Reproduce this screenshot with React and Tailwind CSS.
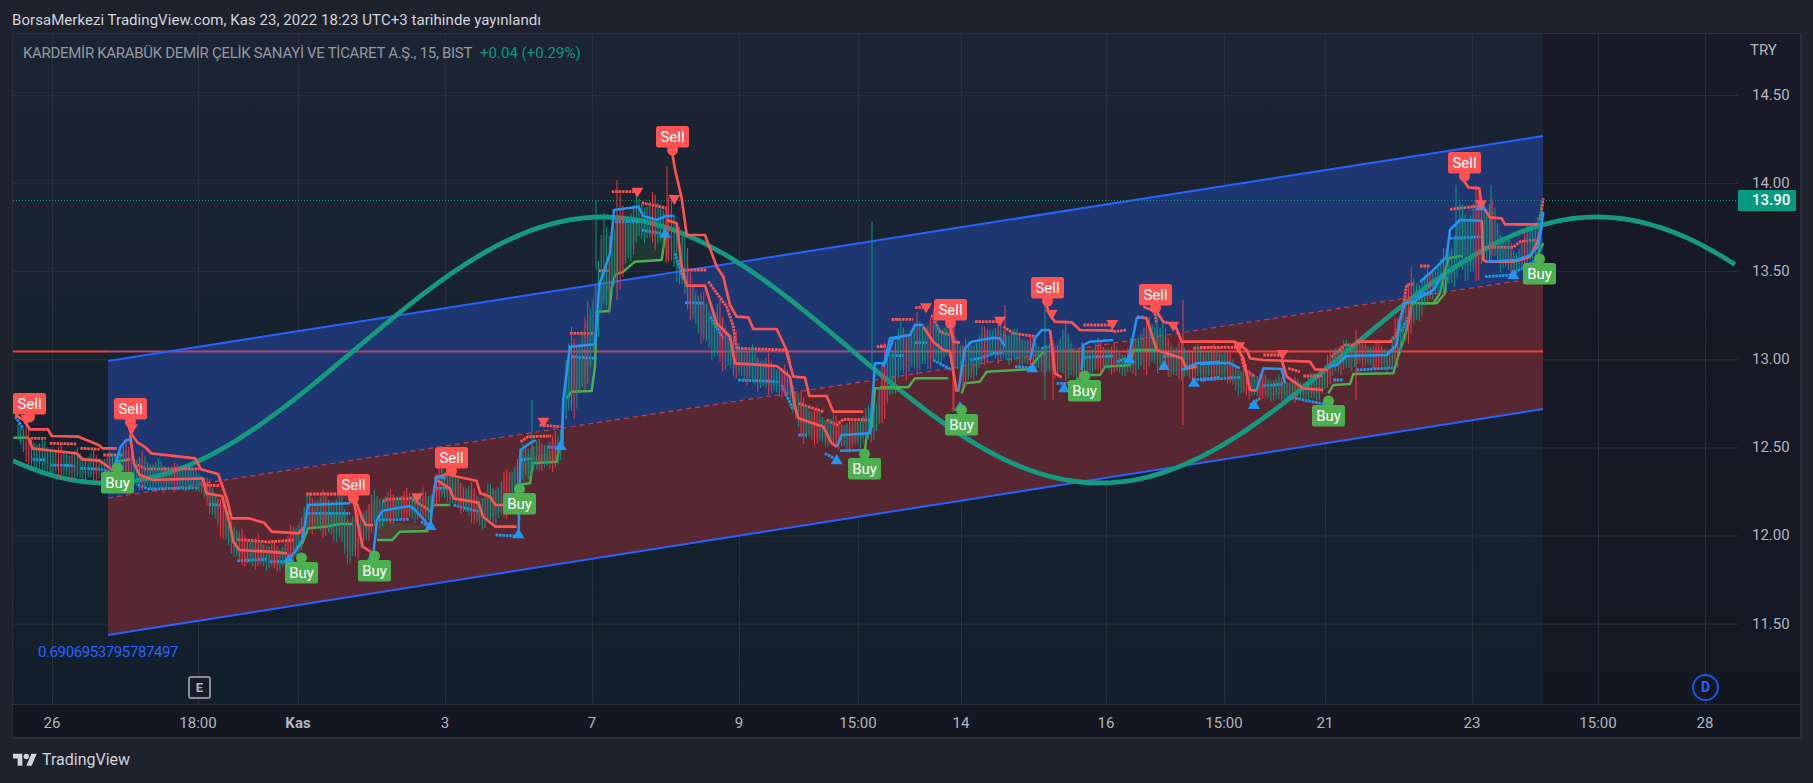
import React from 'react';

const PLOT_W = 1725;
const PLOT_H = 670;
const OX = 13;
const OY = 34;

// every trace below is read off a crop of the chart, so each crop gets its own mapping
const at = (ox, oy, sx, sy) => (lines) =>
  lines.map((l) => l.map(([x, y]) => [ox + x / sx - OX, oy + y / sy - OY]));
const A = at(0, 370, 2.613, 3);
const B = at(560, 110, 3, 3);
const C = at(880, 270, 3, 3);
const D = at(1200, 270, 3, 3);
const E = at(1420, 130, 3, 3);

const redThick = [
  ...A([
    [[40,135],[62,150],[78,178],[125,178],[135,198],[205,200],[232,213],[258,225],[268,235],[305,235]],
    [[332,150],[342,190],[360,218],[380,232],[395,250],[510,265],[525,298],[570,312],[580,345],[595,395],[605,445],[650,445],[690,458],[710,485],[780,490],[795,472]],
    [[910,375],[930,395],[945,440],[955,465],[975,465]],
    [[1135,325],[1170,312],[1195,320],[1245,332],[1255,370],[1280,380],[1295,405],[1340,405]],
    [[75,205],[85,235],[120,240],[200,250],[215,268],[260,272],[295,300]],
    [[340,195],[350,280],[365,315],[400,330],[530,325],[540,370],[580,378],[600,460],[610,515],[625,540],[700,545],[750,550]],
    [[925,395],[935,460],[948,530],[975,550]],
    [[1140,330],[1175,355],[1185,385],[1250,398],[1262,440],[1295,470],[1350,470]],
  ]),
  ...B([
    [[337,130],[345,178],[365,265],[380,375],[435,375],[470,470],[490,500],[510,585],[530,620],[565,622],[580,657],[650,657],[675,710],[700,800],[735,803],[748,858],[800,858],[820,905],[910,905]],
    [[320,330],[350,340],[365,470],[380,527],[435,527],[470,640],[510,680],[525,760],[650,768],[690,800],[705,890],[715,925],[745,935],[790,950],[815,1000],[830,1010]],
  ]),
  ...C([
    [[130,170],[160,215],[190,240],[210,245],[230,365]],
    [[210,165],[220,215],[240,218]],
    [[497,100],[510,135],[525,155],[575,157],[600,180],[700,182]],
    [[510,180],[525,310],[545,322]],
    [[790,110],[830,125],[850,155],[885,165],[905,215],[1020,215]],
    [[770,140],[800,145],[830,240],[905,265],[920,295],[950,290]],
  ]),
  ...D([
    [[0,215],[105,215],[140,240],[150,265],[190,270],[330,275],[345,298],[385,300]],
    [[105,225],[130,265],[150,360],[170,362]],
    [[245,270],[260,320],[310,355],[370,360]],
    [[470,215],[575,215]],
  ]),
  ...E([
    [[130,150],[145,172],[178,175],[185,225],[210,262],[245,265],[255,283],[355,283]],
    [[185,270],[190,390],[200,395],[280,395],[330,380],[350,340],[365,290]],
  ]),
];

const redDots = [
  ...A([
    [[80,205],[120,205]],[[130,220],[200,222]],[[210,235],[260,238]],[[270,255],[320,255]],
    [[360,285],[380,297],[520,297]],[[530,345],[575,347]],[[620,508],[700,516],[770,510]],
    [[800,372],[905,372]],[[1000,395],[1010,388],[1075,385],[1100,405],[1130,425]],
    [[1360,215],[1380,200],[1440,198]],[[1410,165],[1465,170]],
  ]),
  ...B([
    [[30,670],[100,670]],[[115,482],[150,482]],[[155,245],[230,245]],[[245,278],[320,295]],
    [[370,480],[440,480]],[[445,515],[500,590],[520,650],[530,715],[680,720],[690,760]],
    [[715,880],[790,905]],[[800,930],[830,945],[850,928],[930,930]],[[950,710],[975,710]],[[995,628],[1020,628]],
  ]),
  ...C([
    [[0,228],[20,228]],[[35,148],[100,148]],[[105,113],[150,110]],[[155,135],[180,185],[210,195]],
    [[285,155],[360,155]],[[370,170],[400,190],[470,200]],[[610,165],[700,165]],[[700,185],[740,180]],
    [[825,130],[830,160]],[[940,235],[1020,232]],
  ]),
  ...D([
    [[0,232],[110,232]],[[125,265],[135,300],[165,320]],[[190,255],[250,255]],[[265,295],[300,305]],
    [[310,318],[370,318]],[[395,262],[435,225],[465,225]],[[570,215],[590,195],[600,150],[610,110],[620,45],[640,42]],
  ]),
  ...E([
    [[90,238],[180,228]],[[0,408],[30,408]],[[190,352],[280,352],[300,335],[345,330]],[[360,270],[370,205]],
  ]),
];

const blueThick = [
  ...A([
    [[300,290],[315,230],[330,210],[345,210]],
    [[750,575],[770,545],[790,510],[805,405],[915,400]],
    [[975,560],[985,450],[1000,422],[1070,408],[1085,420],[1120,465]],
    [[1125,465],[1130,395],[1140,320],[1165,325]],
    [[1355,490],[1360,240],[1385,220],[1400,210]],
  ]),
  ...B([
    [[5,1000],[10,870],[30,710],[105,703],[118,525],[150,430],[162,300],[235,290],[250,318],[290,330],[318,318],[340,318]],
    [[830,1010],[845,975],[930,970],[945,760],[975,760],[1000,685],[1020,685]],
    [[840,1022],[920,1020]],
  ]),
  ...C([
    [[10,290],[30,205],[90,195],[105,165],[130,165]],
    [[235,365],[255,235],[275,215],[340,203],[360,205],[375,230]],
    [[450,270],[465,205],[485,180],[510,180]],
    [[605,300],[610,225],[630,215],[700,210]],
    [[745,270],[770,145],[790,140]],
    [[905,300],[950,280],[1020,275]],
  ]),
  ...D([
    [[0,282],[85,278],[120,295]],
    [[170,360],[190,295],[245,297],[255,340]],
    [[385,290],[410,285],[440,258],[560,255],[590,225],[600,150],[615,100],[640,95],[700,60],[730,10]],
  ]),
  ...E([
    [[0,455],[30,430],[80,380],[90,300],[120,270],[185,272]],
    [[200,395],[290,390],[330,375],[355,350],[370,245]],
  ]),
];

const blueDots = [
  ...A([
    [[40,140],[60,175]],[[85,268],[120,270]],[[130,285],[195,287]],[[210,295],[265,298],[295,310]],
    [[360,345],[390,357],[520,353]],[[545,403],[575,405]],[[620,572],[700,568]],[[705,575],[745,575]],
    [[805,430],[915,430]],[[990,450],[1070,448]],[[1100,455],[1120,470]],[[1140,355],[1170,355]],
    [[1185,405],[1250,425]],[[1295,495],[1350,498]],[[1360,270],[1390,265]],[[1430,232],[1460,232]],
  ]),
  ...B([
    [[35,740],[110,745]],[[165,335],[240,335]],[[245,360],[300,370]],[[345,430],[370,510]],[[375,578],[430,580]],
    [[450,620],[490,685]],[[535,810],[660,815]],[[665,825],[700,900]],[[715,975],[740,975]],[[795,1030],[830,1050]],
  ]),
  ...C([
    [[35,257],[70,257]],[[105,218],[140,218]],[[160,270],[215,300]],[[270,270],[300,265],[340,250],[370,250]],
    [[405,290],[450,293]],[[485,235],[510,230]],[[530,340],[600,340]],[[615,262],[700,258]],[[710,275],[740,265]],
    [[850,260],[880,258]],[[940,330],[1020,322]],
  ]),
  ...D([
    [[0,330],[120,322]],[[190,348],[250,342]],[[150,405],[180,385]],[[265,380],[310,390],[370,402]],
    [[400,330],[430,330]],[[470,300],[580,293]],[[605,185],[635,120]],[[640,80],[695,70]],
  ]),
  ...E([
    [[90,325],[190,320]],[[195,440],[270,435],[350,390],[365,375]],[[0,490],[35,490]],
  ]),
];

const green = [
  ...A([
    [[35,203],[75,203]],[[305,275],[340,268]],
    [[770,545],[790,520],[805,475],[850,470],[890,462],[920,462]],
    [[985,510],[1025,510],[1045,485],[1120,483]],
    [[1135,405],[1175,405]],
    [[1355,345],[1385,340],[1392,280],[1455,275],[1460,240]],
  ]),
  ...B([
    [[20,865],[35,845],[95,843],[105,770],[110,605],[148,603],[155,535],[165,495],[190,485],[225,455],[305,450],[315,380]],
    [[915,1020],[920,975],[935,950],[945,835],[1020,835]],
  ]),
  ...C([
    [[0,352],[85,352],[105,325],[205,325]],
    [[245,370],[255,340],[300,335],[320,305],[445,298],[490,245]],
    [[570,345],[610,315],[660,315],[675,290],[750,285],[760,240],[830,240]],
  ]),
  ...D([
    [[385,370],[400,345],[450,342],[460,312],[580,310],[600,240],[625,165],[635,100],[710,100],[735,70],[740,20]],
  ]),
  ...E([
    [[0,520],[40,520],[60,490],[85,385],[125,377]],
    [[345,390],[370,340]],
  ]),
];

const greenFills = [
  ...B([
    [[162,335],[310,330],[310,450],[225,455],[190,485],[165,495],[155,535],[148,600],[112,600],[118,525],[150,430]],
    [[30,740],[105,740],[95,843],[35,845],[20,865]],
  ]),
  ...A([
    [[1360,270],[1455,240],[1455,275],[1392,280],[1385,340],[1355,345]],
    [[805,430],[915,430],[890,462],[805,475]],
    [[990,450],[1120,470],[1045,485],[1025,510],[985,510]],
  ]),
];

const upTriangles = [
  ...A([[[305,305],[755,565],[975,555],[1125,465],[1355,490],[1465,225]]]),
  ...B([[[315,368],[830,1048]]]),
  ...C([[[240,408],[457,292],[552,352],[748,265],[852,285],[942,335]]]),
  ...D([[[162,402],[380,395]]]),
  ...E([[[183,226],[280,432]]]),
].flat();

const downTriangles = [
  ...A([[[70,150],[345,178],[1090,385],[1420,158]]]),
  ...B([[[232,248],[343,270]]]),
  ...C([[[138,115],[360,155],[515,135],[697,165],[880,170]]]),
  ...D([[[118,232],[247,255]]]),
  ...E([[[183,226]]]),
].flat();

// x, top of the label in page pixels
const sells = [[13,393],[114,398],[337,474],[435,447],[656,126],[934,299],[1031,277],[1139,284],[1448,152]];
const buys = [[101,472],[285,562],[358,560],[503,493],[848,458],[945,414],[1068,380],[1312,405],[1523,263]];

// price cloud: x, highest and lowest wick
const cloud = [
  [18,420,440],[30,430,470],[50,445,475],[80,450,480],[110,455,480],[125,440,480],[135,450,490],[160,460,490],
  [200,470,490],[225,495,545],[240,530,565],[280,545,570],[295,520,565],[305,500,540],[310,490,530],[340,490,545],
  [350,505,570],[365,500,545],[375,490,530],[400,490,520],[430,490,520],[440,460,500],[460,475,510],[480,490,530],
  [505,470,520],[525,440,480],[540,440,470],[560,430,470],[565,340,430],[575,320,420],[590,300,380],[600,220,330],
  [620,195,290],[640,195,240],[660,190,250],[680,200,290],[690,260,320],[700,290,340],[720,300,370],[740,340,380],
  [760,350,390],[790,370,400],[800,390,440],[820,410,445],[850,420,450],[875,400,440],[885,340,420],[900,320,380],
  [930,310,370],[950,320,360],[965,340,390],[990,320,360],[1020,330,365],[1050,345,375],[1065,320,380],[1080,345,385],
  [1100,340,370],[1125,350,375],[1140,320,375],[1155,310,370],[1175,340,380],[1200,345,380],[1225,345,380],[1240,365,395],
  [1270,375,400],[1300,380,400],[1320,370,400],[1335,340,375],[1360,340,365],[1390,345,370],[1395,320,370],[1410,270,340],
  [1430,270,300],[1450,240,290],[1460,200,280],[1475,180,290],[1490,190,260],[1500,220,270],[1515,250,275],[1540,200,260],
];

const longWicks = [
  [872,222,363,'#089981'],[667,166,260,'#f23645'],[1183,300,425,'#f23645'],[1053,340,400,'#f23645'],[1045,300,400,'#089981'],
  [617,180,300,'#f23645'],[596,200,270,'#089981'],[1356,330,400,'#f23645'],[1491,185,260,'#089981'],[1456,185,260,'#089981'],
  [954,300,410,'#f23645'],[953,330,412,'#f23645'],[532,400,470,'#089981'],[1005,305,345,'#f23645'],[1157,290,350,'#089981'],
];

function buildWicks() {
  const wicks = [];
  let seg = 0;
  for (let x = 18; x < 1542; x += 2.7) {
    while (seg < cloud.length - 2 && cloud[seg + 1][0] < x) seg++;
    const [x0, t0, b0] = cloud[seg];
    const [x1, t1, b1] = cloud[seg + 1];
    const k = (x - x0) / (x1 - x0);
    const top = t0 + (t1 - t0) * k;
    const bot = b0 + (b1 - b0) * k;
    const r1 = Math.abs(Math.sin(x * 12.9898)) % 1;
    const r2 = Math.abs(Math.sin(x * 78.233)) % 1;
    const y1 = top + (bot - top) * r1 * 0.35 - 3;
    const y2 = bot - (bot - top) * r2 * 0.2 + 3;
    wicks.push([x, y1, y2, r1 + r2 > 1 ? '#089981' : '#f23645']);
  }
  return wicks;
}

const toPoints = (line) => line.map(([x, y]) => `${x.toFixed(1)},${y.toFixed(1)}`).join(' ');

const cycleLine = (() => {
  const pts = [];
  for (let x = 13; x <= 1738; x += 6) {
    pts.push([x - OX, 350 - 133 * Math.cos(((x - 603) / 994) * 2 * Math.PI) - OY]);
  }
  return toPoints(pts);
})();

const cloudShade = toPoints([
  ...cloud.map(([x, t, b]) => [x - OX, t + (b - t) * 0.2 - OY]),
  ...[...cloud].reverse().map(([x, t, b]) => [x - OX, b - (b - t) * 0.2 - OY]),
]);

const prices = ['14.50', '14.00', '13.50', '13.00', '12.50', '12.00', '11.50'];
const timeTicks = [
  [52, '26'], [198, '18:00'], [298, 'Kas', true], [445, '3'], [592, '7'], [739, '9'], [858, '15:00'],
  [961, '14'], [1106, '16'], [1224, '15:00'], [1325, '21'], [1472, '23'], [1598, '15:00'], [1705, '28'],
];

function Lines({ lines, color, width, dash }) {
  return lines.map((l, i) => (
    <polyline key={i} points={toPoints(l)} fill="none" stroke={color} strokeWidth={width} strokeDasharray={dash} strokeLinejoin="round" />
  ));
}

function Marker({ x, y, kind }) {
  const sell = kind === 'Sell';
  const color = sell ? '#ff5252' : '#4caf50';
  const left = x - OX;
  const top = y - OY;
  return (
    <g>
      <circle cx={left + 16.5} cy={sell ? top + 24 : top - 4} r="5.5" fill={color} />
      <rect x={left} y={top} width="33" height="21.5" rx="2.5" fill={color} />
      <text x={left + 16.5} y={top + 16} textAnchor="middle" fill="#fff" fontSize="15" fontFamily='Roboto, sans-serif'>{kind}</text>
    </g>
  );
}

function Chart() {
  const wicks = [...buildWicks(), ...longWicks];
  const ch = (x, y) => [x - OX, y - OY];
  return (
    <svg width={PLOT_W} height={PLOT_H} viewBox={`0 0 ${PLOT_W} ${PLOT_H}`} className="block">
      {prices.map((_, i) => (
        <line key={i} x1="0" x2={PLOT_W} y1={95 + i * 88.1 - OY + 0.5} y2={95 + i * 88.1 - OY + 0.5} stroke="#2a2f3b" />
      ))}
      {timeTicks.map(([x]) => (
        <line key={x} x1={x - OX + 0.5} x2={x - OX + 0.5} y1="0" y2={PLOT_H} stroke="#2a2f3b" />
      ))}

      <line x1="0" x2="95" y1="317.5" y2="317.5" stroke="#f23f3f" strokeWidth="1.8" />
      <polygon points={toPoints([ch(108, 361), ch(1543, 136), ch(1543, 277), ch(108, 498)])} fill="#1e3770" />
      <polygon points={toPoints([ch(108, 498), ch(1543, 277), ch(1543, 409), ch(108, 635)])} fill="#572832" />
      <polyline points={toPoints([ch(108, 351.5), ch(1059, 351.5)])} stroke="#ab4a70" strokeWidth="2" fill="none" />
      <polyline points={toPoints([ch(1059, 351.5), ch(1543, 351.5)])} stroke="#f23f3f" strokeWidth="2" fill="none" />
      <polyline points={toPoints([ch(108, 361), ch(1543, 136)])} stroke="#2962ff" strokeWidth="2" fill="none" />
      <polyline points={toPoints([ch(108, 635), ch(1543, 409)])} stroke="#2962ff" strokeWidth="2" fill="none" />
      <polyline points={toPoints([ch(108, 498), ch(1543, 277)])} stroke="#c2405a" strokeWidth="1.2" strokeDasharray="5 4" fill="none" />

      <line x1="0" x2={PLOT_W} y1="166.5" y2="166.5" stroke="#089981" strokeDasharray="1 2" />

      <polygon points={cloudShade} fill="#d06a90" fillOpacity="0.1" />
      {greenFills.map((l, i) => (
        <polygon key={i} points={toPoints(l)} fill="#4caf50" fillOpacity="0.14" />
      ))}

      <polyline points={cycleLine} fill="none" stroke="#159a80" strokeWidth="4.8" />

      <Lines lines={green} color="#4caf50" width="2.4" />
      <Lines lines={redDots} color="#ff5252" width="2.8" dash="2.6 0.8" />
      <Lines lines={blueDots} color="#2196f3" width="2.8" dash="2.6 0.8" />

      {wicks.map(([x, y1, y2, c], i) => (
        <line key={i} x1={x - OX} x2={x - OX} y1={y1 - OY} y2={y2 - OY} stroke={c} strokeWidth="1" />
      ))}

      <Lines lines={redThick} color="#ff5252" width="2.7" />
      <Lines lines={blueThick} color="#2196f3" width="2.5" />

      {upTriangles.map(([x, y], i) => (
        <polygon key={i} points={`${x},${y - 5} ${x + 6},${y + 5} ${x - 6},${y + 5}`} fill="#2196f3" />
      ))}
      {downTriangles.map(([x, y], i) => (
        <polygon key={i} points={`${x},${y + 5} ${x + 6},${y - 5} ${x - 6},${y - 5}`} fill="#ff5252" />
      ))}
      {sells.map(([x, y], i) => <Marker key={i} x={x} y={y} kind="Sell" />)}
      {buys.map(([x, y], i) => <Marker key={i} x={x} y={y} kind="Buy" />)}
    </svg>
  );
}

export default function App() {
  return (
    <div className="w-[1813px] h-[783px] overflow-hidden bg-[#1e222d] text-[#d1d4dc] flex flex-col font-['Roboto',sans-serif] text-[15px]">
      <div className="h-[33px] pl-[12px] pt-[10px] leading-[20px] tracking-[0.05px]">
        BorsaMerkezi TradingView.com, Kas 23, 2022 18:23 UTC+3 tarihinde yayınlandı
      </div>

      <div className="ml-[12px] w-[1790px] h-[706px] border-[1px] border-[#2a2e39] border-r-2 border-b-2 flex flex-col">
        <div className="flex h-[670px]">
          <div className="relative w-[1725px] bg-gradient-to-b from-[#1b2433] to-[#13202c]">
            <div className="absolute right-0 top-0 bottom-0 w-[195px] bg-gradient-to-b from-[#181b27] to-[#131722]" />
            <div className="absolute inset-0">
              <Chart />
            </div>
            <div className="absolute left-[10px] top-[9px] flex gap-2 text-[#9598a1] leading-[20px]">
              <span className="tracking-[-0.3px]">KARDEMİR KARABÜK DEMİR ÇELİK SANAYİ VE TİCARET A.Ş., 15, BIST</span>
              <span className="text-[#089981]">+0.04 (+0.29%)</span>
            </div>
            <div className="absolute left-[25px] top-[608px] text-[#2962ff] leading-[20px] tracking-[-0.4px]">0.6906953795787497</div>
            <div className="absolute left-[175px] top-[642px] w-[23px] h-[23px] border-2 border-[#8a8d96] rounded-[3px] flex items-center justify-center text-[13px] font-bold text-[#b2b5be] bg-[#151b28]">
              E
            </div>
            <div className="absolute left-[1679px] top-[640px] w-[27px] h-[27px] border-2 border-[#1e53e5] rounded-full flex items-center justify-center text-[14px] font-bold text-[#2962ff] bg-[#131722]">
              D
            </div>
          </div>

          <div className="relative flex-1 bg-gradient-to-b from-[#181b27] to-[#131722] text-[#b2b5be] pl-[14px]">
            <div className="absolute top-[6px] left-[12px] leading-[20px]">TRY</div>
            <div className="pt-[51px] flex flex-col">
              {prices.map((p) => (
                <div key={p} className="h-[88.1px] leading-[20px]">{p}</div>
              ))}
            </div>
            <div className="absolute left-0 top-[156px] w-[58px] h-[21px] bg-[#089981] text-white font-medium leading-[21px] pl-[14px]">
              13.90
            </div>
          </div>
        </div>

        <div className="relative flex-1 bg-[#131722] border-t border-[#2a2e39] text-[#b2b5be]">
          {timeTicks.map(([x, label, bold]) => (
            <span
              key={x + label}
              className={`absolute top-[8px] -translate-x-1/2 leading-[20px] ${bold ? 'font-bold' : ''}`}
              style={{ left: x - OX }}
            >
              {label}
            </span>
          ))}
        </div>
      </div>

      <div className="flex items-center gap-[5px] pl-[13px] pt-[11px]">
        <svg width="24" height="19" viewBox="0 0 36 28" fill="#d1d4dc">
          <path d="M14 22H7V11H0V4h14v18zM28 22h-8l7.5-18h8L28 22z" />
          <circle cx="20" cy="8" r="4" />
        </svg>
        <span className="text-[16px] leading-[20px]">TradingView</span>
      </div>
    </div>
  );
}
